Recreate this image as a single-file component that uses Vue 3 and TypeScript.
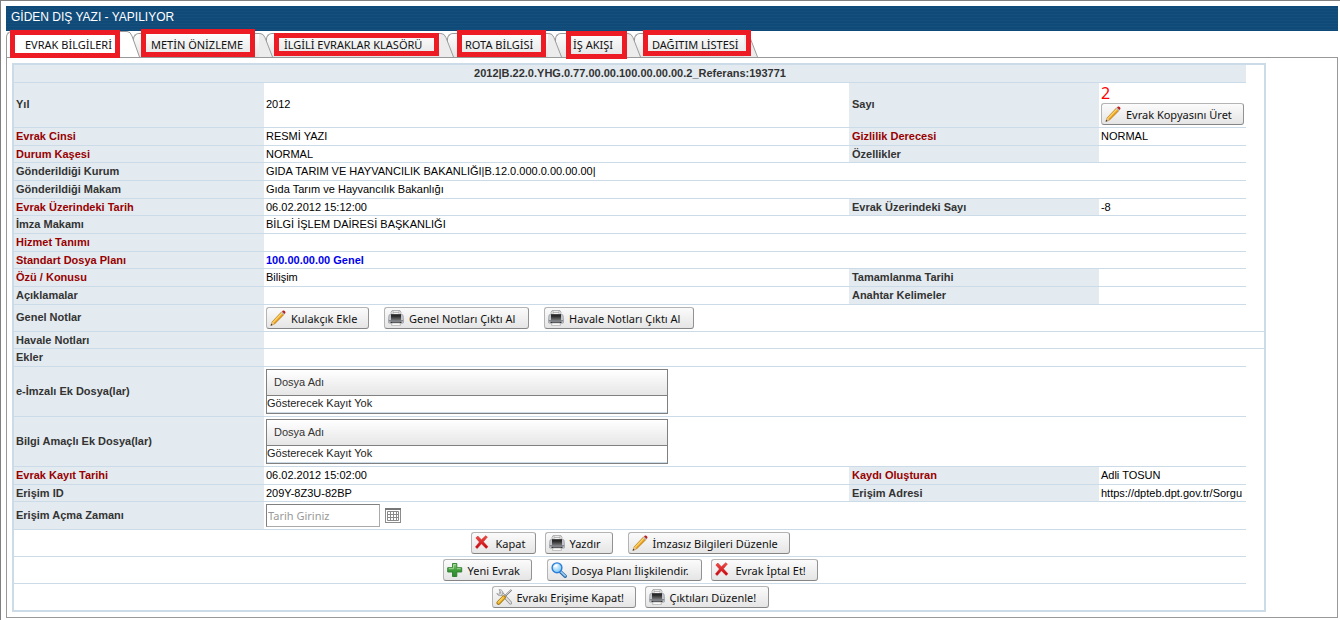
<script setup lang="ts">
import { ref } from 'vue'

type IconName = 'pencil' | 'printer' | 'cross' | 'plus' | 'lens' | 'tools'

interface Tab {
  id: string
  label: string
  size: string
}

interface Action {
  text: string
  icon: IconName
  size: string
  wideGap?: boolean
}

interface Field {
  label: string
  value: string
  required?: boolean
  strong?: boolean
}

interface Row {
  left: Field
  right?: Field
  tall?: boolean
}

const tabs: Tab[] = [
  { id: 'info', label: 'EVRAK BİLGİLERİ', size: 'tab-info' },
  { id: 'preview', label: 'METİN ÖNİZLEME', size: 'tab-preview' },
  { id: 'folder', label: 'İLGİLİ EVRAKLAR KLASÖRÜ', size: 'tab-folder' },
  { id: 'route', label: 'ROTA BİLGİSİ', size: 'tab-route' },
  { id: 'flow', label: 'İŞ AKIŞI', size: 'tab-flow' },
  { id: 'distribution', label: 'DAĞITIM LİSTESİ', size: 'tab-distribution' },
]
const active = ref('info')
const openingDate = ref('')

const mainRows: Row[] = [
  {
    left: { label: 'Evrak Cinsi', value: 'RESMİ YAZI', required: true },
    right: { label: 'Gizlilik Derecesi', value: 'NORMAL', required: true },
    tall: true,
  },
  {
    left: { label: 'Durum Kaşesi', value: 'NORMAL', required: true },
    right: { label: 'Özellikler', value: '' },
  },
  { left: { label: 'Gönderildiği Kurum', value: 'GIDA TARIM VE HAYVANCILIK BAKANLIĞI|B.12.0.000.0.00.00.00|' }, tall: true },
  { left: { label: 'Gönderildiği Makam', value: 'Gıda Tarım ve Hayvancılık Bakanlığı' }, tall: true },
  {
    left: { label: 'Evrak Üzerindeki Tarih', value: '06.02.2012 15:12:00', required: true },
    right: { label: 'Evrak Üzerindeki Sayı', value: '-8' },
  },
  { left: { label: 'İmza Makamı', value: 'BİLGİ İŞLEM DAİRESİ BAŞKANLIĞI' }, tall: true },
  { left: { label: 'Hizmet Tanımı', value: '', required: true }, tall: true },
  { left: { label: 'Standart Dosya Planı', value: '100.00.00.00 Genel', required: true, strong: true } },
  {
    left: { label: 'Özü / Konusu', value: 'Bilişim', required: true },
    right: { label: 'Tamamlanma Tarihi', value: '' },
    tall: true,
  },
  {
    left: { label: 'Açıklamalar', value: '' },
    right: { label: 'Anahtar Kelimeler', value: '' },
    tall: true,
  },
]

const accessRows: Row[] = [
  {
    left: { label: 'Evrak Kayıt Tarihi', value: '06.02.2012 15:02:00', required: true },
    right: { label: 'Kaydı Oluşturan', value: 'Adli TOSUN', required: true },
    tall: true,
  },
  {
    left: { label: 'Erişim ID', value: '209Y-8Z3U-82BP' },
    right: { label: 'Erişim Adresi', value: 'https://dpteb.dpt.gov.tr/Sorgu' },
  },
]

const attachments: string[] = ['e-İmzalı Ek Dosya(lar)', 'Bilgi Amaçlı Ek Dosya(lar)']

const noteActions: Action[] = [
  { text: 'Kulakçık Ekle', icon: 'pencil', size: 'btn-103' },
  { text: 'Genel Notları Çıktı Al', icon: 'printer', size: 'btn-145', wideGap: true },
  { text: 'Havale Notları Çıktı Al', icon: 'printer', size: 'btn-150', wideGap: true },
]

const footerActions: Action[][] = [
  [
    { text: 'Kapat', icon: 'cross', size: 'btn-65' },
    { text: 'Yazdır', icon: 'printer', size: 'btn-68' },
    { text: 'İmzasız Bilgileri Düzenle', icon: 'pencil', size: 'btn-162', wideGap: true },
  ],
  [
    { text: 'Yeni Evrak', icon: 'plus', size: 'btn-89' },
    { text: 'Dosya Planı İlişkilendir.', icon: 'lens', size: 'btn-155', wideGap: true },
    { text: 'Evrak İptal Et!', icon: 'cross', size: 'btn-107' },
  ],
  [
    { text: 'Evrakı Erişime Kapat!', icon: 'tools', size: 'btn-144' },
    { text: 'Çıktıları Düzenle!', icon: 'printer', size: 'btn-124' },
  ],
]
</script>

<template>
  <div class="page">
    <svg class="sprite" width="0" height="0" aria-hidden="true">
      <defs>
        <linearGradient id="g-pencil" x1="0" y1="0" x2="1" y2="1">
          <stop offset="0.3" stop-color="#fbdc74" />
          <stop offset="0.5" stop-color="#f3ae2a" />
          <stop offset="0.7" stop-color="#c06e0a" />
        </linearGradient>
        <linearGradient id="g-dark" x1="0" y1="0" x2="0" y2="1">
          <stop offset="0" stop-color="#0c0c0c" />
          <stop offset="1" stop-color="#7b7b7b" />
        </linearGradient>
        <linearGradient id="g-red" x1="0" y1="0" x2="0" y2="1">
          <stop offset="0" stop-color="#f0504a" />
          <stop offset="1" stop-color="#c4000c" />
        </linearGradient>
        <linearGradient id="g-green" x1="0" y1="0" x2="0" y2="1">
          <stop offset="0" stop-color="#8fcf7c" />
          <stop offset="0.5" stop-color="#3f9e3a" />
          <stop offset="1" stop-color="#2c8a2c" />
        </linearGradient>
        <radialGradient id="g-lens" cx="0.4" cy="0.35" r="0.7">
          <stop offset="0" stop-color="#f2fbff" />
          <stop offset="1" stop-color="#6cc0f5" />
        </radialGradient>
      </defs>
      <symbol id="i-pencil" viewBox="0 0 16 16">
        <path d="M1.200 15.200 2.200 11.800 11.400 2 14 4.500 4.500 14Z" fill="url(#g-pencil)" stroke="#b9770f" stroke-width="0.7" />
        <path d="M3 12.500 12.200 2.900" stroke="#fde58e" stroke-width="0.9" />
        <path d="M1 15.500 2.200 11.800 4.500 14Z" fill="#e8c78e" />
        <path d="M.5 15.800 1.200 13.700 2.700 15.100Z" fill="#333" />
        <path d="M11 2.600 12 1.600 14.500 4 13.500 5Z" fill="#b9bdc5" />
        <path d="M12 1.600 13 .6C14 0 16 1.800 15.400 3L14.500 4Z" fill="#b81f1f" />
      </symbol>
      <symbol id="i-printer" viewBox="0 0 16 16">
        <path d="M3.500 5 3 2.500 4 .6H12L13 2.500 12.500 5Z" fill="#f4f4f4" stroke="#999" stroke-width="0.8" />
        <path d="M5 1V5M11 1V5M5 2.500H11" stroke="#a8a8a8" stroke-width="0.8" />
        <path d="M.8 6Q.8 4.500 2 4.500H14Q15.200 4.500 15.200 6L15.700 12Q15.700 13.200 14.500 13.200H1.500Q.3 13.200.3 12Z" fill="#c3c7cd" stroke="#8e9297" stroke-width="0.6" />
        <path d="M3 4.500H13V10.500H3Z" fill="url(#g-dark)" />
        <path d="M3 5H13" stroke="#333" stroke-width="1" />
        <path d="M.8 10.800H15.200" stroke="#6a6e72" stroke-width="1" />
        <path d="M2.500 12.300H13.500" stroke="#262626" stroke-width="1.200" />
        <path d="M4 13H12L12.500 15.400H3.500Z" fill="#fff" stroke="#a5a5a5" stroke-width="0.7" />
      </symbol>
      <symbol id="i-cross" viewBox="0 0 16 16">
        <path d="M.8 3 2.800 1 6.400 4.700 10.600.8 12.400 2 8.400 6.800 13 11.800 11.100 13.400 6.400 8.800 2.200 13.600.4 12 4.400 7Z" fill="url(#g-red)" stroke="#c22" stroke-width="0.5" />
      </symbol>
      <symbol id="i-plus" viewBox="0 0 16 16">
        <path d="M5.500 1.500H9.800V5.700H14.700V10H9.800V14.500H5.500V10H.7V5.700H5.500Z" fill="url(#g-green)" stroke="#2b7d2c" stroke-width="0.9" stroke-linejoin="round" />
        <path d="M6.500 2.600H8.800M6.400 3V6.700H1.800M9.900 6.700H13.700" fill="none" stroke="#b5e0a6" stroke-width="0.8" />
      </symbol>
      <symbol id="i-lens" viewBox="0 0 16 16">
        <path d="M9.200 9.500 14.200 14.300" stroke="#2b69a8" stroke-width="3.400" stroke-linecap="round" />
        <path d="M9.500 9.300 14.200 13.800" stroke="#9accf0" stroke-width="1.600" stroke-linecap="round" />
        <circle cx="6" cy="5.800" r="4.900" fill="url(#g-lens)" stroke="#2d7ed6" stroke-width="1.400" />
        <path d="M3.200 5Q4 2.800 6.500 2.800" fill="none" stroke="#fff" stroke-width="1.200" />
      </symbol>
      <symbol id="i-tools" viewBox="0 0 16 16">
        <path d="M15.400.8 7.500 8.700" stroke="#777" stroke-width="1.800" />
        <path d="M15 1 8 8" stroke="#ededed" stroke-width="0.7" />
        <path d="M5 3.600 14.500 13.800" stroke="#888" stroke-width="3.200" stroke-linecap="round" />
        <path d="M5 3.600 14.500 13.800" stroke="#e0e0e0" stroke-width="1.900" stroke-linecap="round" />
        <path d="M3 .7C5.500.2 7.500 2.500 6.600 5 5.500 7.400 2 7.200.8 4.500L3 5.400 4.800 3.800Z" fill="#dedede" stroke="#888" stroke-width="0.7" />
        <path d="M7.800 8.300 2.500 13.800" stroke="#9c6e0f" stroke-width="4" stroke-linecap="round" />
        <path d="M7.500 8.500 2.600 13.600" stroke="#f1ba2d" stroke-width="2.600" stroke-linecap="round" />
        <path d="M6.600 8.700 2.500 13" stroke="#fce494" stroke-width="0.8" stroke-linecap="round" />
      </symbol>
    </svg>

    <header class="title-bar">
      <h1>GİDEN DIŞ YAZI - YAPILIYOR</h1>
    </header>

    <nav class="tabs" role="tablist">
      <button
        v-for="(tab, i) in tabs"
        :key="tab.id"
        type="button"
        role="tab"
        class="tab"
        :class="[tab.size, { active: active === tab.id }]"
        :aria-selected="active === tab.id"
        :style="{ zIndex: tabs.length - i }"
        @click="active = tab.id"
      >
        <span class="tab-body">{{ tab.label }}</span>
        <svg class="tab-edge" viewBox="0 0 14 26" preserveAspectRatio="none" aria-hidden="true">
          <path class="edge-fill" d="M0 0.500H1Q4.500.5 6 5L13.500 26H0Z" />
          <path class="edge-line" d="M0 0.500H1Q4.500.5 6 5L13.500 26" />
        </svg>
        <span class="mark"></span>
      </button>
    </nav>

    <main class="panel">
      <table class="form">
        <colgroup>
          <col class="col-label" />
          <col />
          <col class="col-label" />
          <col class="col-side" />
          <col class="col-gutter" />
        </colgroup>
        <tbody>
          <tr class="tall">
            <th colspan="4" class="reference">2012|B.22.0.YHG.0.77.00.00.100.00.00.00.2_Referans:193771</th>
            <td class="gutter"></td>
          </tr>
          <tr class="number-row">
            <th scope="row" class="roomy">Yıl</th>
            <td class="roomy">2012</td>
            <th scope="row" class="second roomy">Sayı</th>
            <td class="number-cell">
              <div class="number">2</div>
              <button type="button" class="btn btn-143">
                <svg class="icon" aria-hidden="true"><use href="#i-pencil" /></svg>
                <span>Evrak Kopyasını Üret</span>
              </button>
            </td>
            <td class="gutter"></td>
          </tr>
          <tr v-for="row in mainRows" :key="row.left.label" :class="{ tall: row.tall }">
            <th scope="row" :class="{ required: row.left.required }">{{ row.left.label }}</th>
            <td :colspan="row.right ? 1 : 3" :class="{ strong: row.left.strong }">{{ row.left.value }}</td>
            <template v-if="row.right">
              <th scope="row" class="second" :class="{ required: row.right.required }">{{ row.right.label }}</th>
              <td>{{ row.right.value }}</td>
            </template>
            <td class="gutter"></td>
          </tr>
          <tr>
            <th scope="row" class="roomy">Genel Notlar</th>
            <td colspan="3">
              <div class="actions">
                <button
                  v-for="action in noteActions"
                  :key="action.text"
                  type="button"
                  class="btn"
                  :class="[action.size, { 'wide-gap': action.wideGap }]"
                >
                  <svg class="icon" aria-hidden="true"><use :href="`#i-${action.icon}`" /></svg>
                  <span>{{ action.text }}</span>
                </button>
              </div>
            </td>
            <td class="gutter ruled"></td>
          </tr>
          <tr>
            <th scope="row">Havale Notları</th>
            <td colspan="3"></td>
            <td class="gutter ruled"></td>
          </tr>
          <tr class="tall">
            <th scope="row">Ekler</th>
            <td colspan="3"></td>
            <td class="gutter"></td>
          </tr>
          <tr v-for="name in attachments" :key="name">
            <th scope="row" class="roomy">{{ name }}</th>
            <td colspan="3">
              <table class="files">
                <thead>
                  <tr><th scope="col">Dosya Adı</th></tr>
                </thead>
                <tbody>
                  <tr><td>Gösterecek Kayıt Yok</td></tr>
                </tbody>
              </table>
            </td>
            <td class="gutter"></td>
          </tr>
          <tr v-for="row in accessRows" :key="row.left.label" :class="{ tall: row.tall }">
            <th scope="row" :class="{ required: row.left.required }">{{ row.left.label }}</th>
            <td>{{ row.left.value }}</td>
            <th scope="row" class="second" :class="{ required: row.right?.required }">{{ row.right?.label }}</th>
            <td>{{ row.right?.value }}</td>
            <td class="gutter"></td>
          </tr>
          <tr>
            <th scope="row" class="roomy"><label for="opening-date">Erişim Açma Zamanı</label></th>
            <td colspan="3">
              <div class="date">
                <input id="opening-date" v-model="openingDate" type="text" placeholder="Tarih Giriniz" />
                <button type="button" class="calendar" aria-label="Takvim">
                  <svg viewBox="0 0 16 15" aria-hidden="true">
                    <rect x="0.500" y="0.500" width="15" height="14" fill="#fff" stroke="#8c8c8c" />
                    <path d="M0 1H16" stroke="#777" stroke-width="2" />
                    <path d="M2.500 3.500H13.500V12.500H2.500ZM2.500 6.500H13.500M2.500 9.500H13.500M5.500 3V13M8.500 3V13M11.500 3V13" fill="none" stroke="#8a8a8a" />
                  </svg>
                </button>
              </div>
            </td>
            <td class="gutter"></td>
          </tr>
          <tr v-for="(group, i) in footerActions" :key="i" class="footer-row">
            <td colspan="4">
              <div class="actions centered">
                <button
                  v-for="action in group"
                  :key="action.text"
                  type="button"
                  class="btn"
                  :class="[action.size, { 'wide-gap': action.wideGap }]"
                >
                  <svg class="icon" aria-hidden="true"><use :href="`#i-${action.icon}`" /></svg>
                  <span>{{ action.text }}</span>
                </button>
              </div>
            </td>
            <td class="gutter"></td>
          </tr>
        </tbody>
      </table>
    </main>
  </div>
</template>

<style>
body {
  margin: 0;
  background: #fff;
}
</style>

<style scoped>
.page {
  box-sizing: border-box;
  min-height: 100vh;
  padding: 5px 2px 2px 5px;
  border-top: 1px solid #808080;
  border-left: 1px solid #808080;
  font-family: "Liberation Sans", Arial, sans-serif;
  font-size: 11px;
  color: #000;
}

.sprite {
  position: absolute;
}

.title-bar {
  height: 25px;
  padding: 0 5px;
  background: repeating-linear-gradient(#104a78 0 2px, #15507c 2px 3px);
}

.title-bar h1 {
  margin: 0;
  font-size: 12px;
  font-weight: 400;
  line-height: 23px;
  color: #fff;
}

.tabs {
  display: flex;
  align-items: flex-end;
  height: 26px;
}

.tab {
  position: relative;
  display: flex;
  box-sizing: border-box;
  height: 24px;
  margin: 0 -7px 0 0;
  padding: 0;
  border: 0;
  background: none;
  font-family: "Noto Sans", "Open Sans", sans-serif;
  font-size: 11px;
  color: #111;
  text-align: left;
  cursor: pointer;
}

.tab.active {
  height: 26px;
}

.tab-body {
  flex: 1;
  box-sizing: border-box;
  height: 100%;
  padding-left: 17px;
  border-top: 1px solid #999;
  border-left: 1px solid #999;
  border-radius: 6px 0 0 0;
  background: linear-gradient(#fdfdfd, #e4e4e4);
  line-height: 22px;
  white-space: nowrap;
}

.active .tab-body {
  padding-left: 18px;
  background: #fff;
  line-height: 26px;
}

.tab-edge {
  flex: none;
  width: 14px;
  height: 100%;
}

.edge-fill {
  fill: #ececec;
}

.active .edge-fill {
  fill: #fff;
}

.edge-line {
  fill: none;
  stroke: #999;
}

.tab-info { width: 134px; }
.tab-preview { width: 140px; }
.tab-folder { width: 188px; }
.tab-route { width: 115px; }
.tab-flow { width: 86px; }
.tab-distribution { width: 124px; }

.mark {
  position: absolute;
  border: 5px solid #ed1c24;
}

.tab-info .mark { inset: -1px 20px -1px 4px; }
.tab-preview .mark { inset: -4px 18px 0 8px; }
.tab-folder .mark { inset: 0 15px 1px 8px; }
.tab-route .mark { inset: -3px 16px 0 10px; }
.tab-flow .mark { inset: -2px 14px -2px 11px; }
.tab-distribution .mark { inset: -3px 7px 1px 9px; }

.panel {
  padding: 5px 71px 5px 5px;
  border: 1px solid #999;
}

.form {
  width: 100%;
  table-layout: fixed;
  border: 2px solid #cbdce8;
  border-spacing: 0;
  border-collapse: separate;
}

.col-label { width: 250px; }
.col-side { width: 147px; }
.col-gutter { width: 18px; }

.form th,
.form td {
  box-sizing: border-box;
  height: 17px;
  padding: 0 2px;
  border-bottom: 1px solid #cbdce8;
  line-height: 16px;
  text-align: left;
  white-space: nowrap;
}

.form th {
  background: #e3ebf0;
  color: #333;
}

.form .tall th,
.form .tall td {
  height: 18px;
  padding-bottom: 1px;
}

.form .roomy {
  padding-bottom: 2px;
}

.form .reference {
  text-align: center;
}

.form .required {
  color: #900;
}

.form .second {
  padding-left: 3px;
}

.form .strong {
  font-weight: 700;
  color: #00e;
}

.form .gutter {
  border-bottom: 0;
}

.form .ruled {
  border-bottom: 1px solid #cbdce8;
}

.form .footer-row:last-child td {
  border-bottom: 0;
}

.form .number-row td {
  height: 45px;
}

.form .number-cell {
  vertical-align: top;
}

.number {
  font-family: "Noto Sans", "Open Sans", sans-serif;
  font-size: 16px;
  line-height: 20px;
  color: #f00;
}

.actions {
  display: flex;
  gap: 9px;
  padding: 2px 0;
}

.centered {
  justify-content: center;
}

.btn {
  display: flex;
  align-items: center;
  box-sizing: border-box;
  height: 22px;
  padding: 0 0 0 3px;
  border: 1px solid #b4b4b4;
  border-right-color: #929292;
  border-bottom-color: #858585;
  border-radius: 3px;
  background: linear-gradient(#fbfbfb, #e5e5e5);
  font-family: "Noto Sans", "Open Sans", sans-serif;
  font-size: 11px;
  line-height: 20px;
  color: #111;
  white-space: nowrap;
  cursor: pointer;
}

.btn span {
  padding-top: 2px;
}

.wide-gap {
  margin-left: 6px;
}

.icon {
  flex: none;
  width: 16px;
  height: 16px;
  margin-right: 5px;
}

.btn-65 { width: 65px; }
.btn-68 { width: 68px; }
.btn-89 { width: 89px; }
.btn-103 { width: 103px; }
.btn-107 { width: 107px; }
.btn-124 { width: 124px; }
.btn-143 { width: 143px; }
.btn-144 { width: 144px; }
.btn-145 { width: 145px; }
.btn-150 { width: 150px; }
.btn-155 { width: 155px; }
.btn-162 { width: 162px; }

.files {
  width: 402px;
  margin: 2px 0;
  border: 1px solid #808080;
  border-spacing: 0;
}

.form .files th {
  height: 26px;
  padding: 0 7px 2px;
  border-bottom: 1px solid #808080;
  background: linear-gradient(#fff, #e6e6e6);
  font-weight: 400;
}

.form .files td {
  height: 17px;
  padding: 0 0 2px;
  line-height: 14px;
  color: #222;
}

.date {
  display: flex;
  align-items: center;
  gap: 5px;
  padding: 2px 0;
}

.date input {
  box-sizing: border-box;
  width: 114px;
  height: 23px;
  padding: 0 1px;
  border: 1px solid #aaa;
  border-top-color: #808080;
  border-left-color: #808080;
  font-family: "Noto Sans", "Open Sans", sans-serif;
  font-size: 11px;
}

.date input::placeholder {
  color: #999;
}

.calendar {
  width: 16px;
  height: 15px;
  padding: 0;
  border: 0;
  background: none;
  cursor: pointer;
}

.calendar svg {
  display: block;
  width: 16px;
  height: 15px;
}
</style>
